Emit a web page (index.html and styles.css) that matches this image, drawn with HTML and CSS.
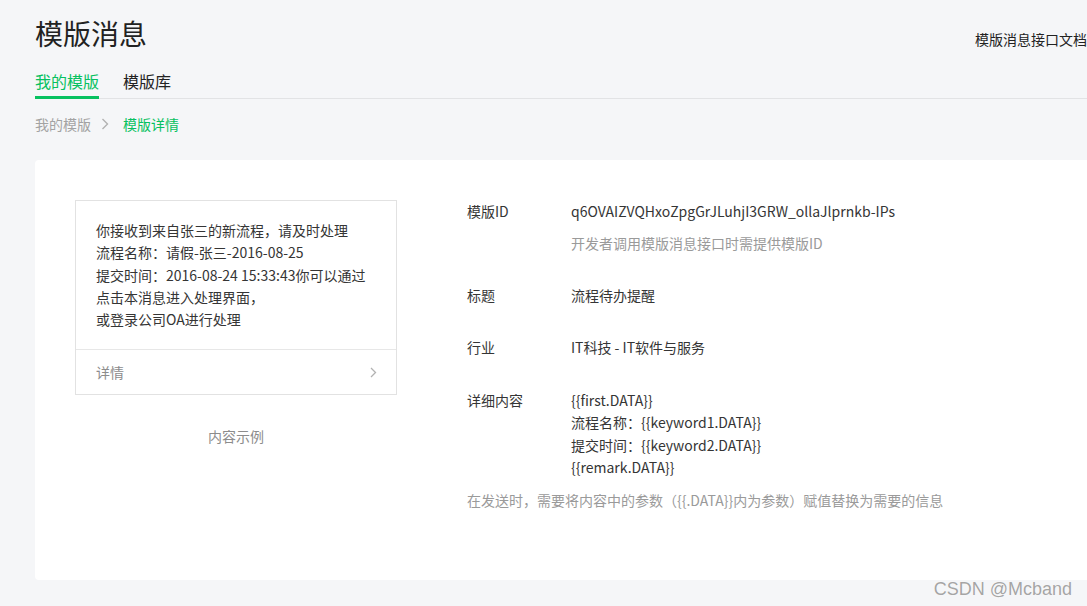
FILE: index.html
```html
<!DOCTYPE html>
<html lang="zh-CN">
<head>
<meta charset="utf-8">
<title>模版消息</title>
<link rel="stylesheet" href="styles.css">
</head>
<body>
<div class="page">
  <header class="head">
    <h1 class="title">模版消息</h1>
    <a class="doc-link">模版消息接口文档</a>
  </header>
  <nav class="tabs">
    <span class="tab active">我的模版</span>
    <span class="tab">模版库</span>
  </nav>
  <div class="crumbs">
    <span class="crumb">我的模版</span>
    <svg class="crumb-sep" width="8" height="12" viewBox="0 0 8 12"><path d="M1.5 1 L6.5 6 L1.5 11" fill="none" stroke="#b2b2b2" stroke-width="1.4"/></svg>
    <span class="crumb current">模版详情</span>
  </div>
  <section class="card">
    <div class="preview-col">
      <div class="preview">
        <div class="preview-body">
          <p>你接收到来自张三的新流程，请及时处理</p>
          <p>流程名称：请假-张三-2016-08-25</p>
          <p>提交时间：2016-08-24 15:33:43你可以通过</p>
          <p>点击本消息进入处理界面，</p>
          <p>或登录公司OA进行处理</p>
        </div>
        <div class="preview-foot">
          <span>详情</span>
          <svg width="7" height="11" viewBox="0 0 7 11"><path d="M1 1 L5.5 5.5 L1 10" fill="none" stroke="#b2b2b2" stroke-width="1.3"/></svg>
        </div>
      </div>
      <div class="preview-caption">内容示例</div>
    </div>
    <div class="info">
      <div class="row">
        <div class="label">模版ID</div>
        <div class="value">
          <div>q6OVAIZVQHxoZpgGrJLuhjI3GRW_ollaJlprnkb-IPs</div>
          <div class="hint">开发者调用模版消息接口时需提供模版ID</div>
        </div>
      </div>
      <div class="row">
        <div class="label">标题</div>
        <div class="value">流程待办提醒</div>
      </div>
      <div class="row">
        <div class="label">行业</div>
        <div class="value">IT科技 - IT软件与服务</div>
      </div>
      <div class="row detail">
        <div class="label">详细内容</div>
        <div class="value">
          <div>{{first.DATA}}</div>
          <div>流程名称：{{keyword1.DATA}}</div>
          <div>提交时间：{{keyword2.DATA}}</div>
          <div>{{remark.DATA}}</div>
        </div>
      </div>
      <div class="note">在发送时，需要将内容中的参数（{{.DATA}}内为参数）赋值替换为需要的信息</div>
    </div>
  </section>
</div>
<div class="watermark">CSDN @Mcband</div>
</body>
</html>
```

FILE: styles.css
```css
html, body {
  margin: 0;
  padding: 0;
  overflow: hidden;
}
body {
  background: #f5f6f8;
  color: #353535;
  font-family: "Noto Sans CJK SC", "Noto Sans", sans-serif;
  font-size: 14px;
  width: 1087px;
  height: 606px;
  position: relative;
}
.page {
  padding: 13px 0 0 35px;
}
.head {
  display: flex;
  justify-content: space-between;
  align-items: flex-start;
}
.title {
  margin: 0;
  font-size: 28px;
  font-weight: 400;
  line-height: 40px;
  color: #222;
}
.doc-link {
  margin-top: 15px;
  font-size: 14px;
  line-height: 22px;
  color: #222;
}
.tabs {
  display: flex;
  gap: 24px;
  margin-top: 16px;
  border-bottom: 1px solid #e2e3e5;
}
.tab {
  font-size: 16px;
  line-height: 24px;
  padding-bottom: 3px;
  border-bottom: 3px solid transparent;
  margin-bottom: -1px;
  color: #222;
}
.tab.active {
  color: #07c160;
  border-bottom-color: #07c160;
}
.crumbs {
  display: flex;
  align-items: center;
  margin-top: 14px;
  line-height: 22px;
  height: 22px;
}
.crumb {
  color: #a3a3a3;
}
.crumb-sep {
  margin: 0 14px 0 10px;
}
.crumb.current {
  color: #07c160;
}
.card {
  margin-top: 25px;
  background: #fff;
  border-radius: 4px 0 0 4px;
  display: flex;
  padding: 40px 0 69px 40px;
}
.preview-col {
  width: 322px;
}
.preview {
  border: 1px solid #e2e2e2;
}
.preview-body {
  padding: 18px 20px 19px 20px;
  line-height: 22.3px;
}
.preview-body p {
  margin: 0;
}
.preview-foot {
  border-top: 1px solid #e7e7e7;
  height: 44px;
  display: flex;
  align-items: center;
  justify-content: space-between;
  padding: 0 19px 0 20px;
  color: #8c8c8c;
}
.preview-caption {
  text-align: center;
  color: #8c8c8c;
  margin-top: 30px;
  line-height: 22px;
}
.info {
  margin-left: 70px;
  padding-top: 0;
  display: flex;
  flex-direction: column;
  gap: 30px;
}
.row {
  display: flex;
  line-height: 22px;
}
.row.detail {
  margin-top: 1px;
  line-height: 22.3px;
}
.label {
  width: 104px;
  flex: none;
}
.hint {
  color: #9a9a9a;
  margin-top: 10px;
}
.note {
  color: #9a9a9a;
  line-height: 22px;
  margin-top: -19px;
}
.watermark {
  position: absolute;
  right: 15px;
  bottom: 6px;
  font-family: "Liberation Sans", Arial, sans-serif;
  font-size: 18px;
  color: #a5a5a5;
  text-shadow: 0 0 1px #fff, 0 0 1px #fff;
}
```
